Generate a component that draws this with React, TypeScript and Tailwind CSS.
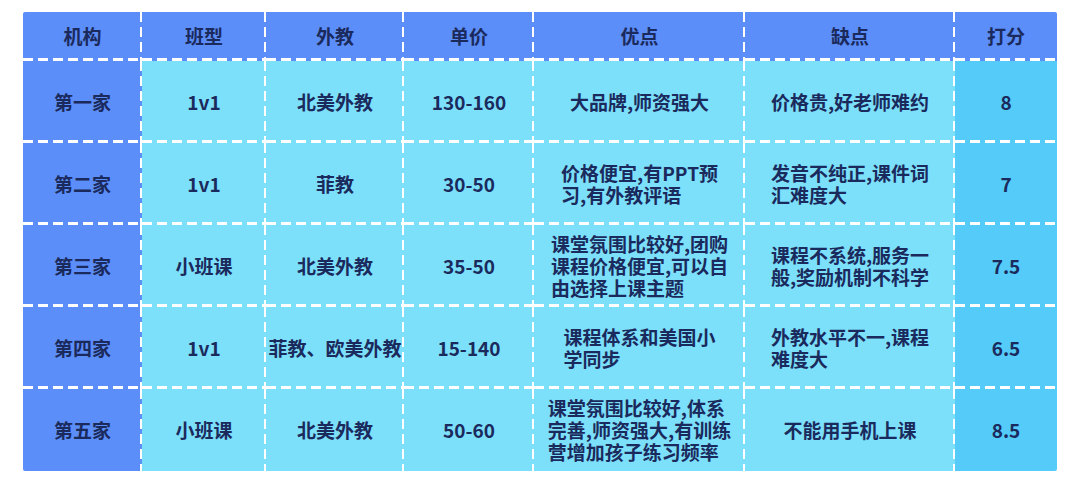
const HEADERS = ["机构", "班型", "外教", "单价", "优点", "缺点", "打分"];

type Row = {
  name: string;
  type: string;
  teacher: string;
  price: string;
  pros: string[];
  cons: string[];
  score: string;
};

const ROWS: Row[] = [
  {
    name: "第一家",
    type: "1v1",
    teacher: "北美外教",
    price: "130-160",
    pros: ["大品牌,师资强大"],
    cons: ["价格贵,好老师难约"],
    score: "8",
  },
  {
    name: "第二家",
    type: "1v1",
    teacher: "菲教",
    price: "30-50",
    pros: ["价格便宜,有PPT预", "习,有外教评语"],
    cons: ["发音不纯正,课件词", "汇难度大"],
    score: "7",
  },
  {
    name: "第三家",
    type: "小班课",
    teacher: "北美外教",
    price: "35-50",
    pros: ["课堂氛围比较好,团购", "课程价格便宜,可以自", "由选择上课主题"],
    cons: ["课程不系统,服务一", "般,奖励机制不科学"],
    score: "7.5",
  },
  {
    name: "第四家",
    type: "1v1",
    teacher: "菲教、欧美外教",
    price: "15-140",
    pros: ["课程体系和美国小", "学同步"],
    cons: ["外教水平不一,课程", "难度大"],
    score: "6.5",
  },
  {
    name: "第五家",
    type: "小班课",
    teacher: "北美外教",
    price: "50-60",
    pros: ["课堂氛围比较好,体系", "完善,师资强大,有训练", "营增加孩子练习频率"],
    cons: ["不能用手机上课"],
    score: "8.5",
  },
];

// dashed white grid lines, drawn as repeating gradients on the right / bottom edge
const LINES_RB =
  "bg-[image:repeating-linear-gradient(180deg,#fff_0_10px,transparent_10px_15px),repeating-linear-gradient(90deg,#fff_0_10px,transparent_10px_15px)] bg-[position:right_top,left_bottom] bg-[size:2px_100%,100%_3px] bg-no-repeat";
const LINES_R =
  "bg-[image:repeating-linear-gradient(180deg,#fff_0_10px,transparent_10px_15px)] bg-[position:right_top] bg-[size:2px_100%] bg-no-repeat";
const LINES_B =
  "bg-[image:repeating-linear-gradient(90deg,#fff_0_10px,transparent_10px_15px)] bg-[position:left_bottom] bg-[size:100%_3px] bg-no-repeat";

function Cell({
  lines,
  bg,
  right = true,
  bottom = true,
}: {
  lines: string[];
  bg: string;
  right?: boolean;
  bottom?: boolean;
}) {
  const grid = right && bottom ? LINES_RB : right ? LINES_R : bottom ? LINES_B : "";
  return (
    <div className={`flex items-center justify-center ${bg} ${grid}`}>
      <div className={lines.length > 1 ? "text-left leading-[22px]" : "text-center"}>
        {lines.map((l, i) => (
          <div key={i} className="whitespace-nowrap">
            {l}
          </div>
        ))}
      </div>
    </div>
  );
}

export default function App() {
  const body = "bg-[#7ce0fb]";
  const blue = "bg-[#5b8ef8]";
  const score = "bg-[#54cbf8]";

  return (
    <div className="h-[484px] w-[1080px] bg-white pl-[23px] pt-[12px]">
      <div className="grid w-[1034px] grid-cols-[119px_124px_138px_130px_211px_210px_102px] grid-rows-[49px_82px_82px_82px_82px_82px] overflow-hidden rounded-[2px] font-['Noto_Sans_CJK_SC','Noto_Sans',sans-serif] text-[19px] font-bold text-[#1b2a5c]">
        {HEADERS.map((h, i) => (
          <Cell key={h} lines={[h]} bg={blue} right={i < HEADERS.length - 1} />
        ))}
        {ROWS.map((r, ri) => {
          const last = ri === ROWS.length - 1;
          return [
            <Cell key={`${ri}a`} lines={[r.name]} bg={blue} bottom={!last} />,
            <Cell key={`${ri}b`} lines={[r.type]} bg={body} bottom={!last} />,
            <Cell key={`${ri}c`} lines={[r.teacher]} bg={body} bottom={!last} />,
            <Cell key={`${ri}d`} lines={[r.price]} bg={body} bottom={!last} />,
            <Cell key={`${ri}e`} lines={r.pros} bg={body} bottom={!last} />,
            <Cell key={`${ri}f`} lines={r.cons} bg={body} bottom={!last} />,
            <Cell key={`${ri}g`} lines={[r.score]} bg={score} right={false} bottom={!last} />,
          ];
        })}
      </div>
    </div>
  );
}
